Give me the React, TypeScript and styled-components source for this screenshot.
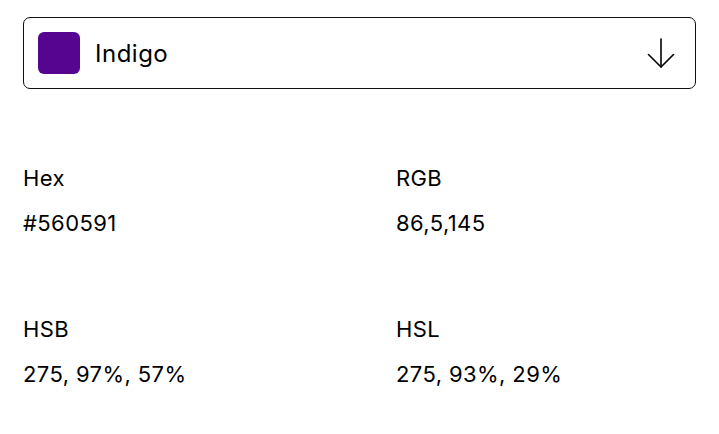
import React from 'react'
import styled, { createGlobalStyle } from 'styled-components'

const GlobalStyle = createGlobalStyle`
  body {
    margin: 0;
    background: #fff;
    color: #000;
    font-family: Inter, "Liberation Sans", Arial, sans-serif;
  }
`

const Page = styled.div`
  padding: 17px 23px 0 23px;
`

const Select = styled.div`
  box-sizing: border-box;
  height: 72px;
  border: 1px solid #111;
  border-radius: 7px;
  display: flex;
  align-items: center;
  padding: 0 20px 0 14px;
`

const Swatch = styled.div<{ $color: string }>`
  width: 42px;
  height: 42px;
  border-radius: 6px;
  background: ${(p) => p.$color};
  flex: none;
`

const SelectLabel = styled.span`
  margin-left: 15px;
  font-size: 24px;
  letter-spacing: 0.5px;
  flex: 1;
`

const ArrowBox = styled.div`
  display: flex;
  align-items: center;
`

const Values = styled.div`
  margin-top: 77px;
  display: grid;
  grid-template-columns: 373px 1fr;
  row-gap: 82px;
`

const Field = styled.div`
  display: flex;
  flex-direction: column;
  gap: 21px;
`

const Label = styled.div`
  font-size: 22px;
  line-height: 24px;
  letter-spacing: 0.4px;
`

const Value = styled.div`
  font-size: 22px;
  line-height: 24px;
  letter-spacing: 0.4px;
`

const fields = [
  { label: 'Hex', value: '#560591' },
  { label: 'RGB', value: '86,5,145' },
  { label: 'HSB', value: '275, 97%, 57%' },
  { label: 'HSL', value: '275, 93%, 29%' },
]

export default function App() {
  return (
    <>
      <GlobalStyle />
      <Page>
        <Select>
          <Swatch $color="#560591" />
          <SelectLabel>Indigo</SelectLabel>
          <ArrowBox>
            <svg width="28" height="30" viewBox="0 0 28 30" fill="none" stroke="#000" strokeWidth="1.6" strokeLinecap="round" strokeLinejoin="round">
              <path d="M14 1v28" />
              <path d="M1.5 16.5L14 29l12.5-12.5" />
            </svg>
          </ArrowBox>
        </Select>
        <Values>
          {fields.map((f) => (
            <Field key={f.label}>
              <Label>{f.label}</Label>
              <Value>{f.value}</Value>
            </Field>
          ))}
        </Values>
      </Page>
    </>
  )
}
